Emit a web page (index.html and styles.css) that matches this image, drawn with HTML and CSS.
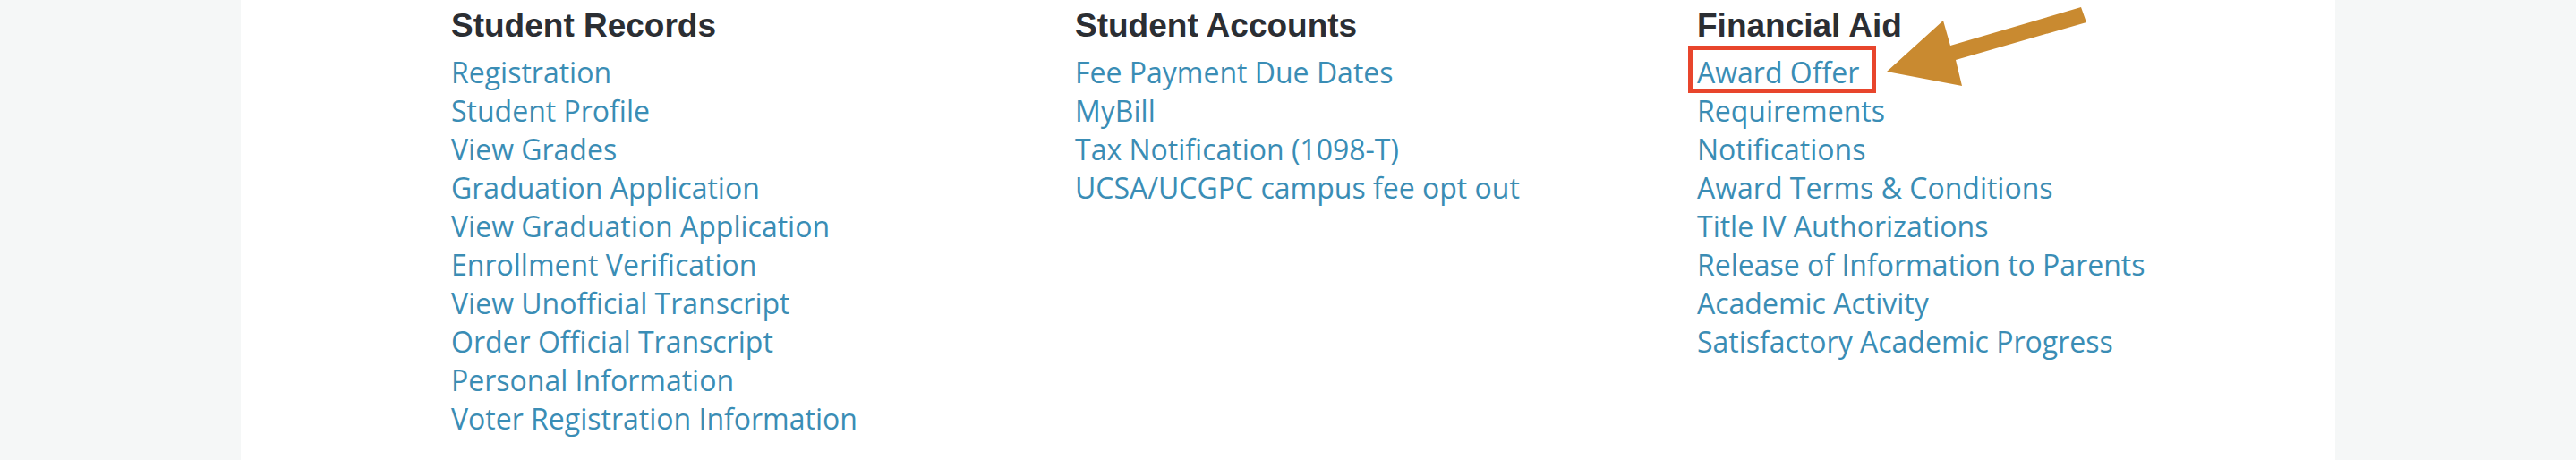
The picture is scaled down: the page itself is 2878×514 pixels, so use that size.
FILE: index.html
```html
<!DOCTYPE html>
<html lang="en">
<head>
<meta charset="utf-8">
<title>Student Center</title>
<link rel="stylesheet" href="styles.css">
</head>
<body>
<div class="page">
  <main class="panel">
    <div class="columns">
      <section class="col">
        <h2 class="col-title">Student Records</h2>
        <ul class="links">
          <li><a href="#">Registration</a></li>
          <li><a href="#">Student Profile</a></li>
          <li><a href="#">View Grades</a></li>
          <li><a href="#">Graduation Application</a></li>
          <li><a href="#">View Graduation Application</a></li>
          <li><a href="#">Enrollment Verification</a></li>
          <li><a href="#">View Unofficial Transcript</a></li>
          <li><a href="#">Order Official Transcript</a></li>
          <li><a href="#">Personal Information</a></li>
          <li><a href="#">Voter Registration Information</a></li>
        </ul>
      </section>
      <section class="col">
        <h2 class="col-title">Student Accounts</h2>
        <ul class="links">
          <li><a href="#">Fee Payment Due Dates</a></li>
          <li><a href="#">MyBill</a></li>
          <li><a href="#">Tax Notification (1098-T)</a></li>
          <li><a href="#">UCSA/UCGPC campus fee opt out</a></li>
        </ul>
      </section>
      <section class="col col-aid">
        <h2 class="col-title">Financial Aid</h2>
        <ul class="links">
          <li><a href="#" class="highlighted">Award Offer<span class="mark-box"></span></a></li>
          <li><a href="#">Requirements</a></li>
          <li><a href="#">Notifications</a></li>
          <li><a href="#">Award Terms &amp; Conditions</a></li>
          <li><a href="#">Title IV Authorizations</a></li>
          <li><a href="#">Release of Information to Parents</a></li>
          <li><a href="#">Academic Activity</a></li>
          <li><a href="#">Satisfactory Academic Progress</a></li>
        </ul>
        <svg class="pointer-arrow" width="240" height="110" viewBox="0 0 240 110" aria-hidden="true">
          <polygon points="9,80 72,23 80,51 226,8 232,25 86,67 93,96" fill="#c98a30"/>
        </svg>
      </section>
    </div>
  </main>
</div>
</body>
</html>
```

FILE: styles.css
```css
html, body {
  margin: 0;
  padding: 0;
}

body {
  background: #f5f7f7;
  font-family: "Open Sans", "Liberation Sans", sans-serif;
}

.page {
  min-height: 514px;
}

.panel {
  width: 2340px;
  min-height: 514px;
  margin: 0 auto;
  background: #ffffff;
  box-sizing: border-box;
  padding: 9px 0 0 235px;
}

.columns {
  display: grid;
  grid-template-columns: 697px 695px 1fr;
}

.col {
  position: relative;
}

.col-title {
  margin: 0 0 10px 0;
  font-family: "Liberation Sans", Arial, sans-serif;
  font-weight: bold;
  font-size: 37px;
  line-height: 40px;
  color: #2b2e33;
}

.links {
  list-style: none;
  margin: 0;
  padding: 0;
}

.links li {
  font-size: 32px;
  line-height: 43px;
}

.links a {
  color: #3a8db5;
  text-decoration: none;
}

.highlighted {
  position: relative;
  display: inline-block;
}

.mark-box {
  position: absolute;
  left: -10px;
  right: -19px;
  top: -8px;
  bottom: -2px;
  border: 5px solid #e8452c;
}

.pointer-arrow {
  position: absolute;
  left: 203px;
  top: -9px;
}
```
